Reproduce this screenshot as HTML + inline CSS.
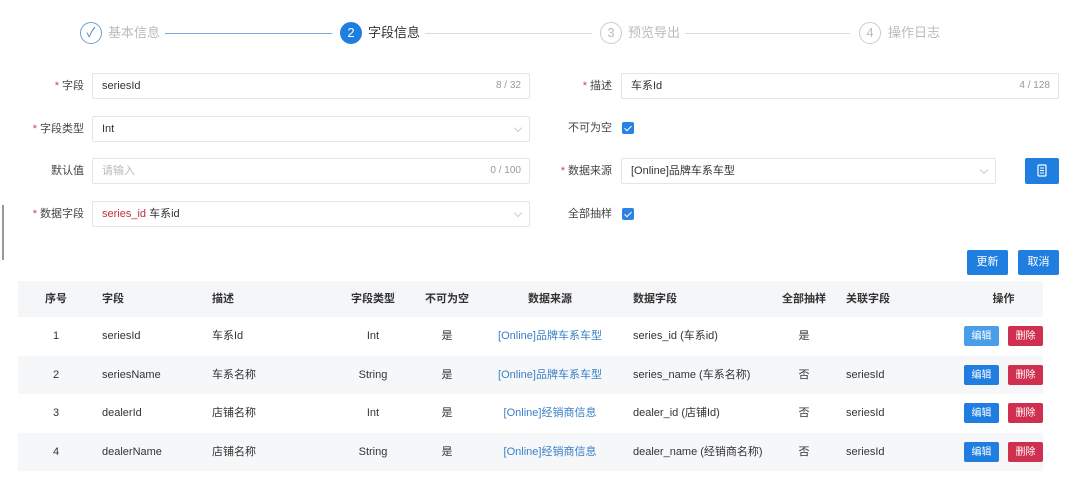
<!DOCTYPE html>
<html><head><meta charset="utf-8"><style>
*{box-sizing:border-box;margin:0;padding:0}
body{width:1080px;height:484px;background:#fff;font-family:"Liberation Sans","Noto Sans CJK SC",sans-serif;font-size:11px;color:#333;position:relative;overflow:hidden}
.a{position:absolute}
.circ{position:absolute;width:22px;height:22px;border-radius:50%;border:1px solid #c8ccd2;color:#bbb;text-align:center;line-height:20px;font-size:13px}
.st{position:absolute;top:22px;line-height:22px;height:22px;font-size:13px;color:#bbb}
.ln{position:absolute;top:33px;height:1px;background:#d8dbe0}
.lbl{position:absolute;text-align:right;font-size:11px;color:#444;line-height:26px;height:26px}
.lbl i{color:#e04040;font-style:normal;margin-right:3px}
.inp{position:absolute;height:26px;border:1px solid #e3e5e9;border-radius:2px;line-height:24px;padding-left:9px;font-size:11px;color:#333}
.cnt{position:absolute;right:8px;top:0;color:#999;font-size:10px;line-height:24px}
.arr{position:absolute;right:8px;top:8px;width:6px;height:6px;border-right:1px solid #ccc;border-bottom:1px solid #ccc;transform:rotate(45deg)}
.cb{position:absolute;width:12px;height:12px;background:#2b82e4;border-radius:2px}
.cb:after{content:"";position:absolute;left:4px;top:1.5px;width:3px;height:6px;border-right:1.5px solid #fff;border-bottom:1.5px solid #fff;transform:rotate(45deg)}
.btn{position:absolute;background:#1f7ee0;color:#fff;border-radius:2px;text-align:center;font-size:11px}
table{position:absolute;left:18px;top:281px;width:1025px;border-collapse:collapse;font-size:11px;table-layout:fixed}
td,th{height:38.5px;line-height:38px;padding:0;white-space:nowrap;vertical-align:middle}
th{font-weight:bold;color:#333;background:#f5f6f8;height:36px;line-height:36px}
tr.g td{background:#f6f7f9}
.c{text-align:center}.l{text-align:left}
.bl{color:#3a7fc8}
.e,.d{display:inline-block;width:35px;height:20px;line-height:21px;color:#fff;border-radius:2px;font-size:10px;text-align:center;vertical-align:middle}
.e{background:#1f7ee0}.d{background:#d0304f;margin-left:9px}
</style></head><body>
<div class="a" style="left:2px;top:205px;width:2px;height:55px;background:#999"></div>
<div class="circ" style="left:80px;top:22px;border-color:#6f9fd0;color:#4a88c8">✓</div>
<div class="st" style="left:108px">基本信息</div>
<div class="ln" style="left:165px;width:167px;background:#7fa8d4"></div>
<div class="circ" style="left:340px;top:22px;background:#1f7ee0;border-color:#1f7ee0;color:#fff">2</div>
<div class="st" style="left:368px;color:#333">字段信息</div>
<div class="ln" style="left:425px;width:167px"></div>
<div class="circ" style="left:600px;top:22px">3</div>
<div class="st" style="left:628px">预览导出</div>
<div class="ln" style="left:685px;width:165px"></div>
<div class="circ" style="left:859px;top:22px">4</div>
<div class="st" style="left:888px">操作日志</div>

<div class="lbl" style="left:0;width:84px;top:73px"><i>*</i>字段</div>
<div class="inp" style="left:92px;top:73px;width:438px">seriesId<span class="cnt">8 / 32</span></div>
<div class="lbl" style="left:0;width:84px;top:116px"><i>*</i>字段类型</div>
<div class="inp" style="left:92px;top:116px;width:438px">Int<span class="arr"></span></div>
<div class="lbl" style="left:0;width:84px;top:158px">默认值</div>
<div class="inp" style="left:92px;top:158px;width:438px;color:#bbb">请输入<span class="cnt">0 / 100</span></div>
<div class="lbl" style="left:0;width:84px;top:201px"><i>*</i>数据字段</div>
<div class="inp" style="left:92px;top:201px;width:438px"><span style="color:#c0303a">series_id</span> 车系id<span class="arr"></span></div>

<div class="lbl" style="left:540px;width:72px;top:73px"><i>*</i>描述</div>
<div class="inp" style="left:621px;top:73px;width:438px">车系Id<span class="cnt">4 / 128</span></div>
<div class="lbl" style="left:540px;width:72px;top:115px">不可为空</div>
<div class="cb" style="left:622px;top:122px"></div>
<div class="lbl" style="left:540px;width:72px;top:158px"><i>*</i>数据来源</div>
<div class="inp" style="left:621px;top:158px;width:375px">[Online]品牌车系车型<span class="arr"></span></div>
<div class="btn" style="left:1025px;top:158px;width:34px;height:26px"><svg width="10" height="13" style="margin-top:6px" viewBox="0 0 10 13"><rect x="1" y="1" width="8" height="11" rx="1" fill="none" stroke="#fff" stroke-width="1.2"/><path d="M3 4h4M3 6.5h4M3 9h4" stroke="#fff"/></svg></div>
<div class="lbl" style="left:540px;width:72px;top:201px">全部抽样</div>
<div class="cb" style="left:622px;top:208px"></div>

<div class="btn" style="left:967px;top:250px;width:41px;height:25px;line-height:25px">更新</div>
<div class="btn" style="left:1018px;top:250px;width:41px;height:25px;line-height:25px">取消</div>

<table>
<colgroup><col style="width:76px"><col style="width:110px"><col style="width:120px"><col style="width:98px"><col style="width:50px"><col style="width:156px"><col style="width:140px"><col style="width:72px"><col style="width:100px"><col style="width:103px"></colgroup>
<tr><th class="c">序号</th><th class="l" style="padding-left:8px">字段</th><th class="l" style="padding-left:8px">描述</th><th class="c">字段类型</th><th class="c">不可为空</th><th class="c">数据来源</th><th class="l" style="padding-left:5px">数据字段</th><th class="c">全部抽样</th><th class="l" style="padding-left:6px">关联字段</th><th class="c" style="padding-left:24px">操作</th></tr>
<tr><td class="c">1</td><td style="padding-left:8px">seriesId</td><td style="padding-left:8px">车系Id</td><td class="c">Int</td><td class="c">是</td><td class="c bl">[Online]品牌车系车型</td><td style="padding-left:5px">series_id (车系id)</td><td class="c">是</td><td></td><td class="c" style="padding-left:24px"><span class="e" style="background:#4a9de8">编辑</span><span class="d">删除</span></td></tr>
<tr class="g"><td class="c">2</td><td style="padding-left:8px">seriesName</td><td style="padding-left:8px">车系名称</td><td class="c">String</td><td class="c">是</td><td class="c bl">[Online]品牌车系车型</td><td style="padding-left:5px">series_name (车系名称)</td><td class="c">否</td><td style="padding-left:6px">seriesId</td><td class="c" style="padding-left:24px"><span class="e">编辑</span><span class="d">删除</span></td></tr>
<tr><td class="c">3</td><td style="padding-left:8px">dealerId</td><td style="padding-left:8px">店铺名称</td><td class="c">Int</td><td class="c">是</td><td class="c bl">[Online]经销商信息</td><td style="padding-left:5px">dealer_id (店铺Id)</td><td class="c">否</td><td style="padding-left:6px">seriesId</td><td class="c" style="padding-left:24px"><span class="e">编辑</span><span class="d">删除</span></td></tr>
<tr class="g"><td class="c">4</td><td style="padding-left:8px">dealerName</td><td style="padding-left:8px">店铺名称</td><td class="c">String</td><td class="c">是</td><td class="c bl">[Online]经销商信息</td><td style="padding-left:5px">dealer_name (经销商名称)</td><td class="c">否</td><td style="padding-left:6px">seriesId</td><td class="c" style="padding-left:24px"><span class="e">编辑</span><span class="d">删除</span></td></tr>
</table>
</body></html>
